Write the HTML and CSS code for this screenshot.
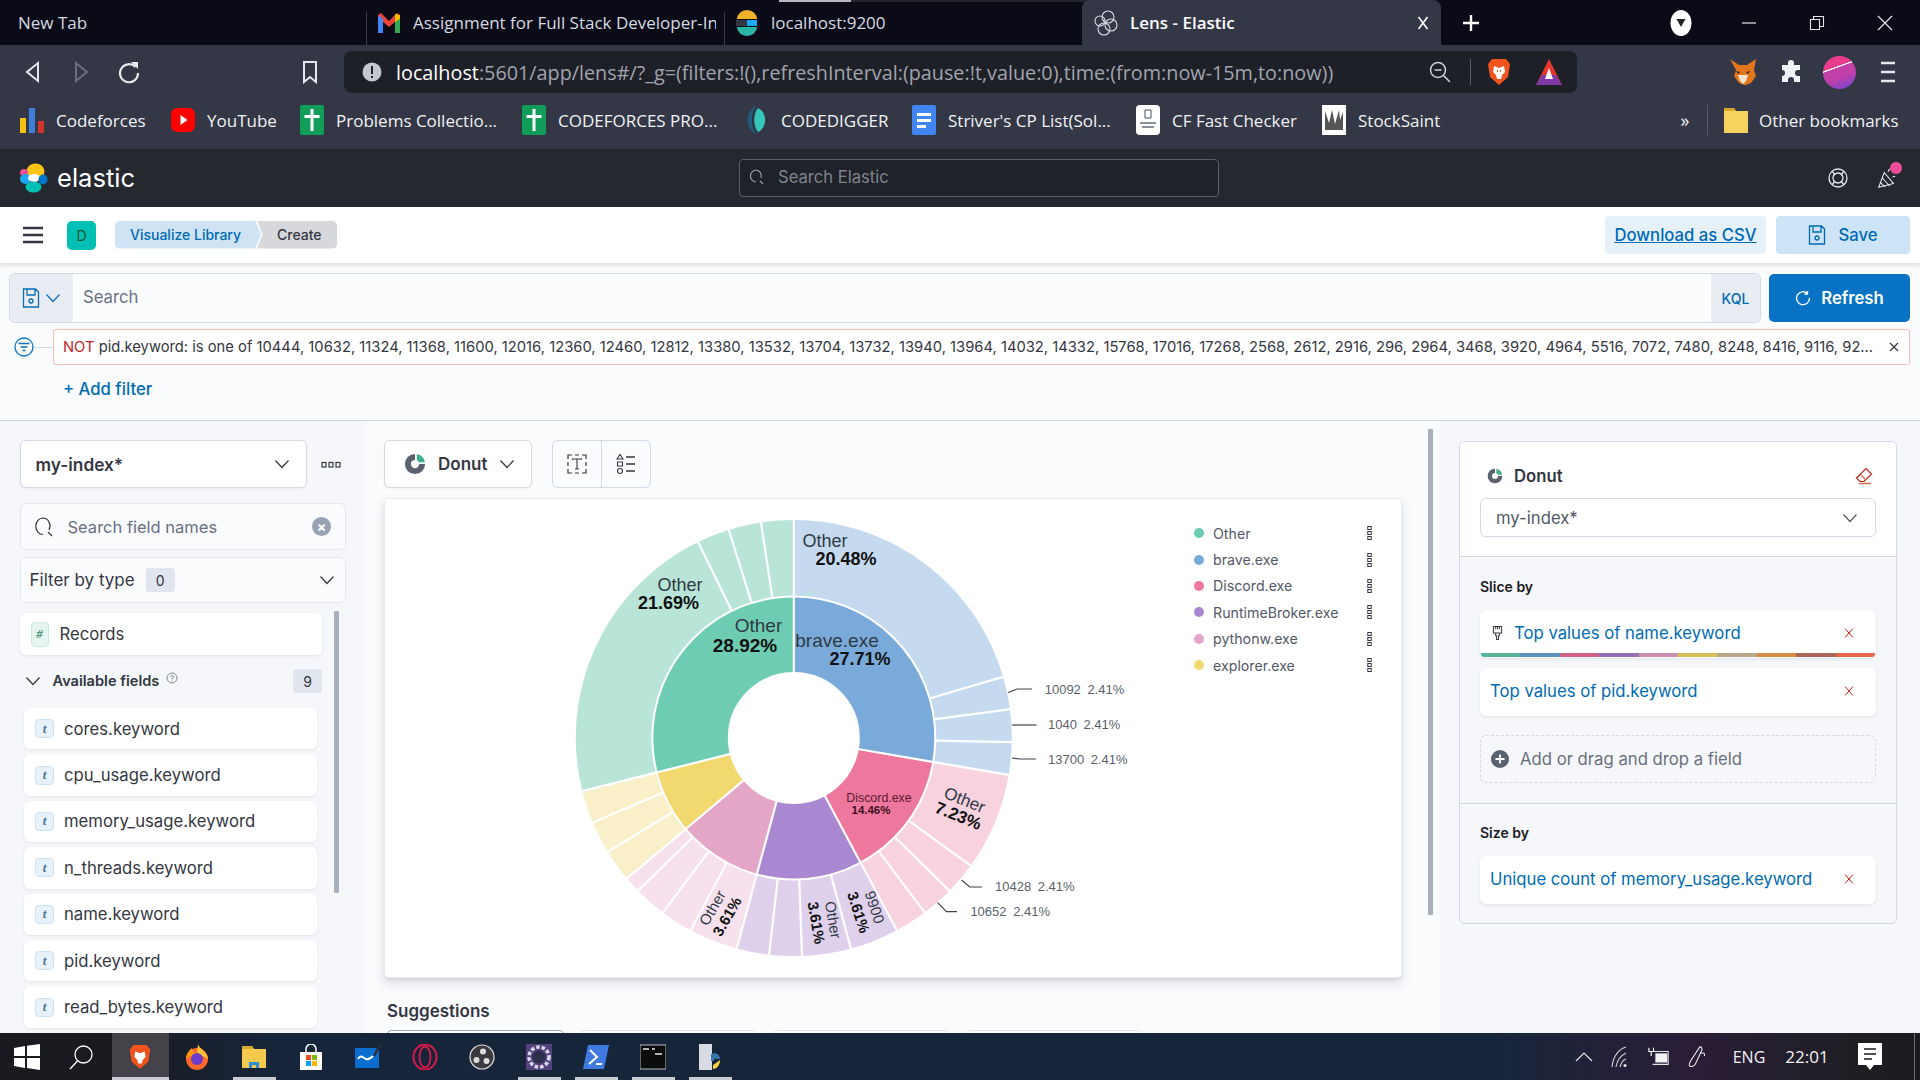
FILE: index.html
```html
<!DOCTYPE html>
<html lang="en">
<head>
<meta charset="utf-8">
<title>Lens - Elastic</title>
<link rel="stylesheet" href="styles.css">
</head>
<body>
<svg class="defs" width="0" height="0">
  <symbol id="chev" viewBox="0 0 16 16"><path d="M1.500 4.500 8 11.500l6.500-7" fill="none" stroke="currentColor" stroke-width="1.200"/></symbol>
  <symbol id="kebab-h" viewBox="0 0 20 8"><g fill="none" stroke="#343741" stroke-width="1.200"><rect x="1" y="1.500" width="4" height="4.500"/><rect x="8" y="1.500" width="4" height="4.500"/><rect x="15" y="1.500" width="4" height="4.500"/></g></symbol>
  <symbol id="kebab-v" viewBox="0 0 5 14"><g fill="none" stroke="#343741" stroke-width="1"><rect x=".8" y=".5" width="3.400" height="3"/><rect x=".8" y="5.500" width="3.400" height="3"/><rect x=".8" y="10.500" width="3.400" height="3"/></g></symbol>
  <symbol id="gplus" viewBox="0 0 24 30"><path d="M2 0h20a2 2 0 0 1 2 2v26a2 2 0 0 1-2 2H2a2 2 0 0 1-2-2V2a2 2 0 0 1 2-2z" fill="#0f9d58"/><path d="M10.500 4h3v6h6v3h-6v13h-3V13h-6v-3h6z" fill="#fff"/></symbol>
  <symbol id="x" viewBox="0 0 12 12"><path d="M2 1.500 10 10.500M10 1.500 2 10.500" stroke="#bd271e" stroke-width="1" fill="none"/></symbol>
  <symbol id="donut" viewBox="0 0 24 24"><path d="M12 1a11 11 0 1 0 11 11h-6.500A4.500 4.500 0 1 1 12 7.500z" fill="#5a6270"/><path d="M14 1.200A11 11 0 0 1 22.800 10h-6.600A5 5 0 0 0 14 7.800z" fill="#3fae8c"/></symbol>
  <symbol id="floppy" viewBox="0 0 18 20"><path d="M1.500 1h12l3 3v15h-15zM5 1v6h8V1M7 13a2 2 0 1 0 4 0 2 2 0 1 0-4 0" fill="none" stroke="currentColor" stroke-width="1.300"/></symbol>
</svg>

<header class="tabs">
  <div class="tab tab-first">New Tab</div>
  <div class="tab">
    <svg class="ic-tab" viewBox="0 0 24 26"><path d="M1 23V5l3-2 8 8 8-8 3 2v18h-5V12l-6 5-6-5v11z" fill="#ea4335"/><path d="M1 23V5l5 4v14z" fill="#4285f4"/><path d="M23 23V5l-5 4v14z" fill="#34a853"/><path d="M18 4l5 1v4l-5 3z" fill="#fbbc04"/></svg>
    <span class="tab-label">Assignment for Full Stack Developer-In</span>
  </div>
  <div class="tab">
    <svg class="ic-tab" viewBox="0 0 24 26"><path d="M2 9a10 9 0 0 1 20 0z" fill="#f0b429"/><path d="M1 10h11v6H1z" fill="#343741"/><path d="M12 10h10v6H12z" fill="#1ba9f5"/><path d="M2 17h20a10 9 0 0 1-20 0z" fill="#2bb5a6"/></svg>
    <span class="tab-label">localhost:9200</span>
  </div>
  <div class="tab tab-active">
    <svg class="ic-tab" viewBox="0 0 24 26"><g fill="none" stroke="#d8dbe2" stroke-width="1.100"><circle cx="14" cy="7" r="6"/><circle cx="6" cy="11" r="5"/><circle cx="17" cy="15" r="6"/><circle cx="10" cy="19" r="6"/></g></svg>
    <span class="tab-label">Lens - Elastic</span>
    <svg class="tab-close" viewBox="0 0 12 14"><path d="M1.500 1 10.500 13M10.500 1 1.500 13" stroke="#fff" stroke-width="1.600"/></svg>
  </div>
  <svg class="new-tab" viewBox="0 0 18 18"><path d="M9 1v16M1 9h16" stroke="#fff" stroke-width="2.400"/></svg>
  <div class="win-ctl">
    <span class="win-btn"><svg class="ic-drop" viewBox="0 0 22 28"><ellipse cx="11" cy="14" rx="10.500" ry="13" fill="#fff"/><path d="M6.500 10h9L11 18z" fill="#24262e"/></svg></span>
    <span class="win-btn"><svg class="ic16" viewBox="0 0 16 16"><path d="M1 8h14" stroke="#e6e6e8" stroke-width="1.200"/></svg></span>
    <span class="win-btn"><svg class="ic16" viewBox="0 0 16 16"><path d="M1.500 4.500h9v10h-9zM4.500 4.500v-3h10v10h-4" fill="none" stroke="#e6e6e8" stroke-width="1.100"/></svg></span>
    <span class="win-btn"><svg class="ic16" viewBox="0 0 16 16"><path d="M1 1 15 15M15 1 1 15" stroke="#e6e6e8" stroke-width="1.200"/></svg></span>
  </div>
</header>

<nav class="toolbar">
  <span class="nav-btn"><svg class="ic24" viewBox="0 0 24 24"><path d="M17 3v18L6 12z" fill="none" stroke="#e8e9ee" stroke-width="2"/></svg></span>
  <span class="nav-btn"><svg class="ic24" viewBox="0 0 24 24"><path d="M7 3v18l11-9z" fill="none" stroke="#6d7080" stroke-width="2"/></svg></span>
  <span class="nav-btn"><svg class="ic24" viewBox="0 0 24 24"><path d="M18.500 7A9 9 0 1 0 21 13" fill="none" stroke="#e8e9ee" stroke-width="2.200"/><path d="M14 2h7v7z" fill="#e8e9ee"/></svg></span>
  <span class="nav-btn bookmark-btn"><svg class="ic24" viewBox="0 0 24 24"><path d="M6 2h12v20l-6-5-6 5z" fill="none" stroke="#e8e9ee" stroke-width="2"/></svg></span>
  <div class="urlbar">
    <svg class="ic20" viewBox="0 0 20 20"><circle cx="10" cy="10" r="9.500" fill="#c5c7cf"/><path d="M9 4h2v8H9zM9 14h2v2H9z" fill="#1f2129"/></svg>
    <span class="url"><b>localhost</b>:5601/app/lens#/?_g=(filters:!(),refreshInterval:(pause:!t,value:0),time:(from:now-15m,to:now))</span>
    <div class="url-actions">
      <svg class="ic24" viewBox="0 0 24 24"><circle cx="10" cy="10" r="7.500" fill="none" stroke="#d0d2d9" stroke-width="1.500"/><path d="M6.500 10h7M15.500 15.500 22 22" stroke="#d0d2d9" stroke-width="1.500"/></svg>
      <span class="url-sep"></span>
      <svg class="ic-lion" viewBox="0 0 24 28"><path d="M5 1h14l4 5-2 13-9 8-9-8L1 6z" fill="#f1531f"/><path d="M7 8l5 2 5-2 1 6-3 3-1 4h-4l-1-4-3-3z" fill="#fff"/><path d="M10 12h1v2h-1zM13 12h1v2h-1z" fill="#f1531f"/></svg>
      <svg class="ic-tri" viewBox="0 0 28 28"><path d="M14 1 27 27H1z" fill="#e6352b"/><path d="M1 27 7 17h14l6 10z" fill="#7d3aa6"/><path d="M14 10 18 21H10z" fill="#fff"/></svg>
    </div>
  </div>
  <span class="nav-btn ext-first"><svg class="ic28" viewBox="0 0 28 28"><path d="M1 1l9 6h8l9-6-2 11 2 6-5 7-5 2h-2l-5-2-5-7 2-6z" fill="#e2761b"/><path d="M9 17h10l-2 6-3 3-3-3z" fill="#f4e3d0"/><path d="M7 13l4 1-2 2zM21 13l-4 1 2 2z" fill="#23262b"/></svg></span>
  <span class="nav-btn"><svg class="ic24" viewBox="0 0 24 24"><path d="M9 3a3 3 0 0 1 6 0v2h6v5h-2a3 3 0 0 0 0 6h2v6h-6v-2a3 3 0 0 0-6 0v2H3v-6a3 3 0 0 0 0-6V5h6z" fill="#f1f2f5"/></svg></span>
  <span class="avatar"></span>
  <span class="nav-btn"><svg class="ic24" viewBox="0 0 24 24"><path d="M5 3h14M5 12h14M5 21h14" stroke="#e8e9ee" stroke-width="2.400"/></svg></span>
</nav>

<nav class="bookmarks">
  <span class="bm"><svg class="ic-bm" viewBox="0 0 24 30"><path d="M0 13h6v15H0z" fill="#f4c20d"/><path d="M9 3h6v25H9z" fill="#3f7fd9"/><path d="M18 16h6v12h-6z" fill="#d0342c"/></svg>Codeforces</span>
  <span class="bm"><svg class="ic-bm" viewBox="0 0 24 30"><rect y="3" width="24" height="24" rx="6" fill="#f00"/><path d="M9.500 10v10l7-5z" fill="#fff"/></svg>YouTube</span>
  <span class="bm"><svg class="ic-bm" viewBox="0 0 24 30"><use href="#gplus"/></svg>Problems Collectio...</span>
  <span class="bm"><svg class="ic-bm" viewBox="0 0 24 30"><use href="#gplus"/></svg>CODEFORCES PRO...</span>
  <span class="bm"><svg class="ic-bm" viewBox="0 0 24 30"><path d="M12 0C0 6-1 23 12 30 5 22 5 8 12 0z" fill="#1e5b7e"/><path d="M13 3c9 4 10 19 0 24-5-6-5-18 0-24z" fill="#36c6bc"/></svg>CODEDIGGER</span>
  <span class="bm"><svg class="ic-bm" viewBox="0 0 24 30"><rect width="24" height="30" rx="2" fill="#4285f4"/><path d="M5 8h14v3H5zM5 14h14v3H5zM5 20h9v3H5z" fill="#fff"/></svg>Striver's CP List(Sol...</span>
  <span class="bm"><svg class="ic-bm" viewBox="0 0 24 30"><rect width="24" height="30" rx="4" fill="#fff"/><path d="M9 5h6v8H9z" fill="none" stroke="#49505c"/><path d="M4 17h16v2H4zM6 21h12v2H6z" fill="#8b909a"/></svg>CF Fast Checker</span>
  <span class="bm"><svg class="ic-bm" viewBox="0 0 24 30"><rect width="24" height="30" fill="#fff"/><path d="M3 25V6l4 12 3-13 3 14 4-14 1 10 3-8v18z" fill="#555"/></svg>StockSaint</span>
  <span class="bm-more">»</span>
  <span class="bm bm-other"><svg class="ic-bm" viewBox="0 0 24 30"><path d="M0 3h10l2 3h12v22H0z" fill="#f4d35e"/><path d="M0 3h10l2 3H0z" fill="#d9a82e"/></svg>Other bookmarks</span>
</nav>

<div class="kbn-head">
  <div class="logo">
    <svg class="logo-mark" viewBox="0 0 28 30"><ellipse cx="16" cy="8.500" rx="9" ry="8" fill="#fec514"/><ellipse cx="4.500" cy="9.500" rx="4" ry="3.500" fill="#f04e98"/><ellipse cx="6" cy="16" rx="5.500" ry="5" fill="#1ba9f5"/><ellipse cx="14.500" cy="15" rx="6" ry="4" fill="#fff"/><ellipse cx="14" cy="24" rx="8" ry="5.500" fill="#00bfb3"/><ellipse cx="23.500" cy="16.500" rx="4.500" ry="5" fill="#0077cc"/></svg>
    <span class="logo-text">elastic</span>
  </div>
  <div class="kbn-search">
    <svg class="ic14" viewBox="0 0 16 16"><path d="M7 1a5.500 6 0 1 0 0 12M7 1a5.500 6 0 0 1 5 8M11 12l3 3" fill="none" stroke="#9a9ea9" stroke-width="1.100"/></svg>
    <span>Search Elastic</span>
  </div>
  <div class="kbn-head-right">
    <svg class="ic22" viewBox="0 0 22 22"><g fill="none" stroke="#e6e8ec" stroke-width="1.300"><circle cx="11" cy="11" r="9"/><circle cx="11" cy="11" r="5"/><path d="M5 4l3 4M17 4l-3 4M5 18l3-4M17 18l-3-4"/></g></svg>
    <span class="party">
      <svg class="ic22" viewBox="0 0 22 24"><path d="M2 22 8 6l10 12zM6 12l8 9M4 17l5 5M12 5l2-3M17 11l3-1" fill="none" stroke="#e6e8ec" stroke-width="1.200"/></svg>
      <i class="party-dot"></i>
    </span>
  </div>
</div>

<div class="crumbbar">
  <svg class="burger" viewBox="0 0 20 18"><path d="M0 2h20M0 9h20M0 16h20" stroke="#343741" stroke-width="2.400"/></svg>
  <span class="space-badge">D</span>
  <div class="crumbs">
    <span class="crumb crumb-link">Visualize Library</span>
    <span class="crumb crumb-last">Create</span>
  </div>
  <div class="crumb-actions">
    <a class="btn-csv">Download as CSV</a>
    <a class="btn-save"><svg class="ic-floppy" viewBox="0 0 18 20"><use href="#floppy"/></svg>Save</a>
  </div>
</div>

<section class="query">
  <div class="query-row">
    <div class="query-group">
      <span class="query-prepend">
        <svg class="ic-floppy" viewBox="0 0 18 20"><use href="#floppy"/></svg>
        <svg class="ic14" viewBox="0 0 16 16"><use href="#chev"/></svg>
      </span>
      <span class="query-input">Search</span>
      <span class="query-kql">KQL</span>
    </div>
    <a class="btn-refresh">
      <svg class="ic14" viewBox="0 0 16 16"><path d="M12.500 3.500A6.500 6.500 0 1 0 14.500 8M12.500 1v3h-3" fill="none" stroke="#fff" stroke-width="1.300"/></svg>
      Refresh
    </a>
  </div>
  <div class="filter-row">
    <svg class="filter-ic" viewBox="0 0 20 20"><circle cx="10" cy="10" r="9" fill="none" stroke="#0a75c4" stroke-width="1.300"/><path d="M4.500 6.500h11M6.500 10h7M8.500 13.500h3" stroke="#0a75c4" stroke-width="1.300"/></svg>
    <span class="filter-link"></span>
    <div class="filter-pill">
      <span class="filter-text"><span class="not">NOT</span> pid.keyword: is one of 10444, 10632, 11324, 11368, 11600, 12016, 12360, 12460, 12812, 13380, 13532, 13704, 13732, 13940, 13964, 14032, 14332, 15768, 17016, 17268, 2568, 2612, 2916, 296, 2964, 3468, 3920, 4964, 5516, 7072, 7480, 8248, 8416, 9116, 9240, 9900</span>
      <svg class="filter-x" viewBox="0 0 12 12"><path d="M2 2l8 8M10 2l-8 8" stroke="#343741" stroke-width="1.200"/></svg>
    </div>
  </div>
  <a class="add-filter">+ Add filter</a>
</section>

<main class="workspace">
  <aside class="fields">
    <div class="index-row">
      <div class="select select-index"><b>my-index*</b><svg class="ic14" viewBox="0 0 16 16"><use href="#chev"/></svg></div>
      <svg class="kebab-h" viewBox="0 0 20 8"><use href="#kebab-h"/></svg>
    </div>
    <div class="field-search">
      <svg class="ic20" viewBox="0 0 20 20"><path d="M9 1a7 8 0 1 0 0 16.500M9 1a7 8 0 0 1 6 12M14 15l4 4" fill="none" stroke="#343741" stroke-width="1.200"/></svg>
      <span class="field-search-ph">Search field names</span>
      <span class="clear-x">×</span>
    </div>
    <div class="field-filter"><span>Filter by type</span><span class="count">0</span><svg class="ic14 push" viewBox="0 0 16 16"><use href="#chev"/></svg></div>
    <div class="field-scroll">
      <div class="field-col">
        <div class="record"><i class="ftype ftype-num">#</i>Records</div>
        <div class="avail">
          <svg class="ic14" viewBox="0 0 16 16"><use href="#chev"/></svg>
          <b>Available fields</b>
          <svg class="help" viewBox="0 0 12 12"><circle cx="6" cy="6" r="5" fill="none" stroke="#69707d" stroke-width=".8"/><path d="M4.500 4.800A1.500 1.500 0 1 1 6 6.500V7.500M6 8.500v1" fill="none" stroke="#69707d" stroke-width=".8"/></svg>
          <span class="count count-avail">9</span>
        </div>
        <ul class="field-list">
          <li class="field"><i class="ftype">t</i>cores.keyword</li>
          <li class="field"><i class="ftype">t</i>cpu_usage.keyword</li>
          <li class="field"><i class="ftype">t</i>memory_usage.keyword</li>
          <li class="field"><i class="ftype">t</i>n_threads.keyword</li>
          <li class="field"><i class="ftype">t</i>name.keyword</li>
          <li class="field"><i class="ftype">t</i>pid.keyword</li>
          <li class="field"><i class="ftype">t</i>read_bytes.keyword</li>
        </ul>
      </div>
      <span class="scrollbar scrollbar-left"></span>
    </div>
  </aside>

  <section class="stage">
    <div class="stage-col">
      <div class="stage-tools">
        <div class="select select-chart"><svg class="ic22" viewBox="0 0 24 24"><use href="#donut"/></svg><b>Donut</b><svg class="ic14" viewBox="0 0 16 16"><use href="#chev"/></svg></div>
        <div class="tool-group">
          <span class="tool"><svg class="ic22" viewBox="0 0 22 22"><path d="M2 6V2h4M9 2h4M16 2h4v4M2 9v4M20 9v4M2 16v4h4M9 20h4M16 20h4v-4" fill="none" stroke="#343741" stroke-width="1.200"/><path d="M6.500 7V6h9v1M11 6v10M9 16h4" fill="none" stroke="#343741" stroke-width="1.100"/></svg></span>
          <span class="tool"><svg class="ic22" viewBox="0 0 22 22"><g fill="none" stroke="#343741" stroke-width="1.100"><path d="M5 1.500 8 6H2zM2.500 9h5v4h-5z"/><circle cx="5" cy="18" r="2.500"/><path d="M11 4h9M11 11h9M11 18h9" stroke-width="1.300"/></g></svg></span>
        </div>
      </div>
      <div class="chart-card">
        <svg class="sunburst" viewBox="385 498 1016 479">
          <g transform="translate(794.800 738) rotate(-90)" fill="none">
            <g stroke-width="76.500">
              <circle r="179.750" pathLength="83" stroke="#c5daef" stroke-dasharray="23 60"/>
              <circle r="179.750" pathLength="83" stroke="#f8d2df" stroke-dasharray="12 71" stroke-dashoffset="-23"/>
              <circle r="179.750" pathLength="83" stroke="#dfd0ec" stroke-dasharray="10 73" stroke-dashoffset="-35"/>
              <circle r="179.750" pathLength="83" stroke="#f6e1ed" stroke-dasharray="8 75" stroke-dashoffset="-45"/>
              <circle r="179.750" pathLength="83" stroke="#f9efc9" stroke-dasharray="6 77" stroke-dashoffset="-53"/>
              <circle r="179.750" pathLength="83" stroke="#b8e5d8" stroke-dasharray="24 59" stroke-dashoffset="-59"/>
            </g>
            <g stroke-width="75.500">
              <circle r="103.750" pathLength="83" stroke="#79aad9" stroke-dasharray="23 60"/>
              <circle r="103.750" pathLength="83" stroke="#ee789d" stroke-dasharray="12 71" stroke-dashoffset="-23"/>
              <circle r="103.750" pathLength="83" stroke="#a987d1" stroke-dasharray="10 73" stroke-dashoffset="-35"/>
              <circle r="103.750" pathLength="83" stroke="#e4a6c7" stroke-dasharray="8 75" stroke-dashoffset="-45"/>
              <circle r="103.750" pathLength="83" stroke="#f1d86f" stroke-dasharray="6 77" stroke-dashoffset="-53"/>
              <circle r="103.750" pathLength="83" stroke="#6dccb1" stroke-dasharray="24 59" stroke-dashoffset="-59"/>
            </g>
            <circle r="141.500" stroke="#fff" stroke-width="2"/>
          </g>
          <g transform="translate(794.800 738)" class="seps">
            <g id="outer-seps">
              <path d="M0-141V-219"/>
              <path d="M0-141V-219" transform="rotate(73.73)"/>
              <path d="M0-141V-219" transform="rotate(82.41)"/>
              <path d="M0-141V-219" transform="rotate(91.08)"/>
              <path d="M0-141V-219" transform="rotate(99.76)"/>
              <path d="M0-141V-219" transform="rotate(125.78)"/>
              <path d="M0-141V-219" transform="rotate(134.46)"/>
              <path d="M0-141V-219" transform="rotate(143.13)"/>
              <path d="M0-141V-219" transform="rotate(151.81)"/>
              <path d="M0-141V-219" transform="rotate(164.82)"/>
              <path d="M0-141V-219" transform="rotate(177.83)"/>
              <path d="M0-141V-219" transform="rotate(186.51)"/>
              <path d="M0-141V-219" transform="rotate(195.18)"/>
              <path d="M0-141V-219" transform="rotate(208.19)"/>
              <path d="M0-141V-219" transform="rotate(216.87)"/>
              <path d="M0-141V-219" transform="rotate(225.54)"/>
              <path d="M0-141V-219" transform="rotate(229.88)"/>
              <path d="M0-141V-219" transform="rotate(238.55)"/>
              <path d="M0-141V-219" transform="rotate(247.23)"/>
              <path d="M0-141V-219" transform="rotate(255.90)"/>
              <path d="M0-141V-219" transform="rotate(333.98)"/>
              <path d="M0-141V-219" transform="rotate(342.65)"/>
              <path d="M0-141V-219" transform="rotate(351.33)"/>
            </g>
            <path d="M0-65V-142"/>
            <path d="M0-65V-142" transform="rotate(99.76)"/>
            <path d="M0-65V-142" transform="rotate(151.81)"/>
            <path d="M0-65V-142" transform="rotate(195.18)"/>
            <path d="M0-65V-142" transform="rotate(229.88)"/>
            <path d="M0-65V-142" transform="rotate(255.90)"/>
          </g>
          <g class="leaders">
            <path d="M1009 692.700 1018 689H1033"/>
            <path d="M1013 725H1037.500"/>
            <path d="M1013 758 1020.700 759H1036.800"/>
            <path d="M962.500 880 970.700 887H983"/>
            <path d="M938.600 902.700 947.500 911.700H958"/>
          </g>
          <g class="lbl">
            <text x="826" y="547">Other</text><text class="b" x="847" y="565">20.48%</text>
            <text x="681" y="591">Other</text><text class="b" x="669.500" y="609">21.69%</text>
            <text class="big" x="759.500" y="632">Other</text><text class="big b" x="746" y="651.500">28.92%</text>
            <text class="big" x="838" y="647">brave.exe</text><text class="b" x="861" y="665">27.71%</text>
            <text class="sm" x="880" y="802">Discord.exe</text><text class="sm b" x="872" y="814">14.46%</text>
            <g transform="rotate(22 962 809)"><text class="mid" x="962" y="805">Other</text><text class="mid b" x="962" y="822">7.23%</text></g>
            <g transform="rotate(72 864 911)"><text class="tiny" x="864" y="904">9900</text><text class="tiny b" x="864" y="921">3.61%</text></g>
            <g transform="rotate(80 822 922)"><text class="tiny" x="822" y="915">Other</text><text class="tiny b" x="822" y="932">3.61%</text></g>
            <g transform="rotate(-60 724 914)"><text class="tiny" x="724" y="907">Other</text><text class="tiny b" x="724" y="924">3.61%</text></g>
          </g>
          <g class="outlbl">
            <text x="1045.700" y="694">10092 2.41%</text>
            <text x="1049" y="729">1040 2.41%</text>
            <text x="1049" y="763.500">13700 2.41%</text>
            <text x="996" y="890.500">10428 2.41%</text>
            <text x="971.400" y="915.500">10652 2.41%</text>
          </g>
        </svg>
        <ul class="legend">
          <li class="lg"><i class="dot d1"></i><span>Other</span><svg class="kebab-v" viewBox="0 0 5 14"><use href="#kebab-v"/></svg></li>
          <li class="lg"><i class="dot d2"></i><span>brave.exe</span><svg class="kebab-v" viewBox="0 0 5 14"><use href="#kebab-v"/></svg></li>
          <li class="lg"><i class="dot d3"></i><span>Discord.exe</span><svg class="kebab-v" viewBox="0 0 5 14"><use href="#kebab-v"/></svg></li>
          <li class="lg"><i class="dot d4"></i><span>RuntimeBroker.exe</span><svg class="kebab-v" viewBox="0 0 5 14"><use href="#kebab-v"/></svg></li>
          <li class="lg"><i class="dot d5"></i><span>pythonw.exe</span><svg class="kebab-v" viewBox="0 0 5 14"><use href="#kebab-v"/></svg></li>
          <li class="lg"><i class="dot d6"></i><span>explorer.exe</span><svg class="kebab-v" viewBox="0 0 5 14"><use href="#kebab-v"/></svg></li>
        </ul>
      </div>
      <h2 class="sugg-title">Suggestions</h2>
      <div class="sugg-row">
        <span class="sugg sugg-on"></span><span class="sugg"></span><span class="sugg"></span><span class="sugg"></span>
      </div>
    </div>
    <span class="scrollbar scrollbar-mid"></span>
  </section>

  <aside class="config">
    <div class="config-card">
      <div class="config-top">
        <div class="config-title">
          <svg class="ic16" viewBox="0 0 24 24"><use href="#donut"/></svg>
          <b>Donut</b>
          <svg class="eraser" viewBox="0 0 18 18"><path d="M1.500 11 11 1.500l5.500 5.500L9 14.500H5z" fill="none" stroke="#bd271e" stroke-width="1.200"/><path d="M4 16.500h12M6 8l5 5" stroke="#e7664c" stroke-width="1.400"/></svg>
        </div>
        <div class="select select-layer"><span>my-index*</span><svg class="ic14" viewBox="0 0 16 16"><use href="#chev"/></svg></div>
      </div>
      <div class="config-sec">
        <h3 class="sec-label">Slice by</h3>
        <div class="dim dim-palette">
          <svg class="brush" viewBox="0 0 12 16"><path d="M1.500 1h9v7h-9zM4 1v3M6 1v3M8 1v3M4 8v3h1v4h2v-4h1V8" fill="none" stroke="#343741" stroke-width="1.100"/></svg>
          <span class="dim-text">Top values of name.keyword</span>
          <svg class="dim-x" viewBox="0 0 12 12"><use href="#x"/></svg>
          <div class="palette"><i class="p1"></i><i class="p2"></i><i class="p3"></i><i class="p4"></i><i class="p5"></i><i class="p6"></i><i class="p7"></i><i class="p8"></i><i class="p9"></i><i class="p10"></i></div>
        </div>
        <div class="dim"><span class="dim-text">Top values of pid.keyword</span><svg class="dim-x" viewBox="0 0 12 12"><use href="#x"/></svg></div>
        <div class="dim-add">
          <svg class="plus" viewBox="0 0 18 18"><circle cx="9" cy="9" r="9" fill="#5a6270"/><path d="M4.500 9h9M9 4.500v9" stroke="#fff" stroke-width="1.800"/></svg>
          <span>Add or drag and drop a field</span>
        </div>
      </div>
      <div class="config-sec config-sec-last">
        <h3 class="sec-label">Size by</h3>
        <div class="dim"><span class="dim-text">Unique count of memory_usage.keyword</span><svg class="dim-x" viewBox="0 0 12 12"><use href="#x"/></svg></div>
      </div>
    </div>
  </aside>
</main>

<footer class="taskbar">
  <span class="tb tb-start"><svg class="ic26" viewBox="0 0 26 26"><path d="M0 4l11-2v10H0zM13 1.700 26 0v12H13zM0 14h11v10L0 22zM13 14h13v12l-13-2z" fill="#fff"/></svg></span>
  <span class="tb tb-search"><svg class="ic-search" viewBox="0 0 26 26"><circle cx="15.500" cy="10.500" r="8.500" fill="none" stroke="#fff" stroke-width="1.300"/><path d="M9.500 17 2 25" stroke="#fff" stroke-width="1.300"/></svg></span>
  <span class="tb tb-run tb-active"><svg class="ic26" viewBox="0 0 24 28"><path d="M5 1h14l4 5-2 13-9 8-9-8L1 6z" fill="#f1531f"/><path d="M7 8l5 2 5-2 1 6-3 3-1 4h-4l-1-4-3-3z" fill="#fff"/></svg></span>
  <span class="tb"><svg class="ic26" viewBox="0 0 26 26"><circle cx="13" cy="15" r="11" fill="#ff6a2a"/><path d="M14 0c1 5 9 7 10 15L13 9z" fill="#ffc233"/><path d="M2 15C3 8 6 6 8 4c0 3 2 4 4 5z" fill="#ff980e"/><circle cx="13" cy="15" r="6" fill="#6d3bc9"/></svg></span>
  <span class="tb tb-run"><svg class="ic26" viewBox="0 0 26 26"><path d="M1 2h10l2 3h12v19H1z" fill="#f5c94e"/><path d="M1 2h10l2 3H1z" fill="#d9a82e"/><path d="M8 18h10v6h-3v-3h-4v3H8z" fill="#2c8fd6"/></svg></span>
  <span class="tb"><svg class="ic26" viewBox="0 0 26 26"><path d="M8 8V5a5 5 0 0 1 10 0v3" fill="none" stroke="#fff" stroke-width="1.500"/><rect x="2" y="8" width="22" height="18" fill="#fff"/><path d="M8 11h5v5H8z" fill="#f25022"/><path d="M14 11h5v5h-5z" fill="#7fba00"/><path d="M8 17h5v5H8z" fill="#00a4ef"/><path d="M14 17h5v5h-5z" fill="#ffb900"/></svg></span>
  <span class="tb"><svg class="ic26" viewBox="0 0 26 26"><rect y="4" width="24" height="20" fill="#0a6ed1"/><path d="M3 15c3-5 5-1 8 0s5-1 7-3" fill="none" stroke="#fff" stroke-width="2"/><path d="M19 12 25 1" stroke="#2a2e3a" stroke-width="2.500"/></svg></span>
  <span class="tb"><svg class="ic26" viewBox="0 0 26 26"><ellipse cx="13" cy="13" rx="11.500" ry="12.500" fill="none" stroke="#d8194a" stroke-width="2"/><ellipse cx="13" cy="13" rx="5.500" ry="10.500" fill="none" stroke="#d8194a" stroke-width="1.800"/></svg></span>
  <span class="tb"><svg class="ic26" viewBox="0 0 26 26"><circle cx="13" cy="13" r="12" fill="#3b3b40" stroke="#ddd" stroke-width="1.200"/><g fill="#ddd"><circle cx="14" cy="7.500" r="3"/><circle cx="7.500" cy="16" r="3"/><circle cx="17.500" cy="17" r="3"/></g></svg></span>
  <span class="tb tb-run"><svg class="ic26" viewBox="0 0 26 26"><rect width="26" height="26" fill="#54417e"/><circle cx="13" cy="13" r="10" fill="none" stroke="#d9dbe4" stroke-width="3.500" stroke-dasharray="3.500 2"/><circle cx="13" cy="13" r="6.500" fill="#2b2f4a"/></svg></span>
  <span class="tb tb-run"><svg class="ic26" viewBox="0 0 26 26"><path d="M5 1h21l-5 24H0z" fill="#3f7ae0"/><path d="M7 6l7 7-8 7M13 20h6" fill="none" stroke="#fff" stroke-width="2"/></svg></span>
  <span class="tb tb-run"><svg class="ic26" viewBox="0 0 26 26"><rect y="1" width="26" height="24" fill="#0c0c0c" stroke="#b9bcc4"/><path d="M3 5h6M12 5h3M15 10h7" stroke="#e6e6e6" stroke-width="1.600"/></svg></span>
  <span class="tb tb-run"><svg class="ic26" viewBox="0 0 26 26"><path d="M2 0h13v26H2z" fill="#d8dbe2"/><path d="M14 10c6-2 9 1 9 5h-6v2h-3z" fill="#3776ab"/><path d="M23 16c0 5-3 9-7 9v-4l3-2z" fill="#ffd43b"/></svg></span>
  <div class="tray">
    <span class="tr"><svg class="ic18" viewBox="0 0 18 18"><path d="M1 13 9 5l8 8" fill="none" stroke="#e6e6e6" stroke-width="1.200"/></svg></span>
    <span class="tr"><svg class="ic22" viewBox="0 0 22 22"><path d="M2 21C3 10 9 3 16 1M6 21c1-7 4-11 10-14M10 21c1-4 3-7 6-8" fill="none" stroke="#d4d5d8" stroke-width="1.100"/><circle cx="15" cy="19.500" r="1.600" fill="#e6e6e6"/></svg></span>
    <span class="tr"><svg class="ic22" viewBox="0 0 24 22"><path d="M5 5h17v14H5" fill="none" stroke="#e6e6e6" stroke-width="1.200"/><path d="M8 7h13v10H8z" fill="#f2f2f2"/><path d="M1 1v4h5V1M3.500 5v5" fill="none" stroke="#fff" stroke-width="1.200"/></svg></span>
    <span class="tr"><svg class="ic22" viewBox="0 0 22 24"><path d="M13 1c2 0 3 2 2 4L8 20c-1 2-5 3-6 2s0-4 1-6z M13 8c4-1 6 0 5 3" fill="none" stroke="#e6e6e6" stroke-width="1.200"/></svg></span>
    <span class="tr tr-txt">ENG</span>
    <span class="tr tr-txt tr-time">22:01</span>
    <span class="tr tr-note"><svg class="ic-note" viewBox="0 0 24 28"><path d="M0 0h24v22h-8l-4 5-4-5H0z" fill="#fff"/><path d="M6 6h12M6 11h12M6 16h8" stroke="#1a1a1f" stroke-width="1.300"/></svg></span>
    <span class="tr-edge"></span>
  </div>
</footer>
</body>
</html>
```

FILE: styles.css
```css
* { box-sizing: border-box; }
html, body { margin: 0; padding: 0; }
body {
  width: 1920px; height: 1080px; overflow: hidden;
  display: flex; flex-direction: column;
  font-family: Inter, "Liberation Sans", sans-serif;
  color: #343741; background: #fafbfd;
}
svg { display: block; flex: none; }
ul { list-style: none; margin: 0; padding: 0; }
h2, h3 { margin: 0; }
i { font-style: normal; }
.defs { position: absolute; }
.ic14 { width: 16px; height: 16px; }
.ic16 { width: 16px; height: 16px; }
.ic18 { width: 18px; height: 18px; }
.ic20 { width: 20px; height: 20px; }
.ic22 { width: 22px; height: 22px; }
.ic24 { width: 24px; height: 24px; }
.ic26 { width: 26px; height: 26px; }
.ic28 { width: 28px; height: 28px; }
.ic-tab { width: 24px; height: 26px; }
.ic-drop { width: 22px; height: 28px; }
.ic-search { width: 26px; height: 26px; margin-left: -3px; }

/* browser tabs */
.tabs {
  height: 45px; flex: none; display: flex; align-items: stretch; position: relative;
  background: #0b0b18; color: #d7d9e0;
  font: 17px "Open Sans", "Noto Sans", sans-serif;
}
.tabs::before { content: ""; position: absolute; top: 0; left: 779px; width: 361px; height: 2px; background: linear-gradient(90deg, #b8b9bd 0 72px, #24252c 72px); }
.tab { width: 358px; display: flex; align-items: center; gap: 12px; padding: 0 8px 0 11px; position: relative; }
.tab::before { content: ""; position: absolute; left: 0; top: 12px; bottom: 0; width: 1px; background: #3a3c49; }
.tab-first { width: 366px; padding-left: 18px; }
.tab-first::before { display: none; }
.tab-label { white-space: nowrap; overflow: hidden; flex: 1; }
.tab-active { width: 359px; background: #343746; color: #fff; border-radius: 8px 8px 0 0; padding-left: 12px; font-weight: 600; }
.tab-active::before { display: none; }
.tab-close { width: 12px; height: 14px; margin-right: 4px; }
.new-tab { width: 18px; height: 18px; margin: 14px 0 0 21px; }
.win-ctl { margin-left: auto; display: flex; align-items: center; padding-right: 1px; }
.win-btn { width: 68px; display: flex; justify-content: center; }

/* toolbar */
.toolbar { height: 54px; flex: none; display: flex; align-items: center; background: #343746; padding-left: 9px; }
.nav-btn { width: 48px; display: flex; justify-content: center; }
.bookmark-btn { margin-left: 133px; }
.ext-first { margin-left: 142px; }
.urlbar {
  width: 1233px; height: 42px; margin-left: 10px; border-radius: 8px;
  background: #1e2028; display: flex; align-items: center; padding: 0 14px 0 18px; gap: 14px;
}
.url { font: 19.800px "Open Sans", "Noto Sans", sans-serif; color: #a1a4ae; white-space: nowrap; }
.url b { font-weight: 400; color: #fff; }
.url-actions { margin-left: auto; display: flex; align-items: center; gap: 16px; }
.url-sep { width: 1px; height: 26px; background: #5a5d6a; margin: 0 2px; }
.ic-lion { width: 24px; height: 28px; margin-left: -2.500px; }
.ic-tri { width: 28px; height: 28px; margin-left: 8.500px; }
.avatar { width: 33px; height: 33px; border-radius: 50%; margin: 0 8px; background: linear-gradient(160deg, #ea3c8f 0 34%, #fff 35% 37%, #c240a8 38% 60%, #6b45d6 100%); }

/* bookmarks */
.bookmarks {
  height: 50px; flex: none; padding: 0 0 8px 20px; background: #343746; color: #f1f2f4;
  display: grid; align-items: center;
  grid-template-columns: 151px 129px 222px 223px 167px 224px 186px 341px 44px 1fr;
  font: 17px "Open Sans", "Noto Sans", sans-serif;
}
.bm { display: flex; align-items: center; gap: 12px; white-space: nowrap; }
.ic-bm { width: 24px; height: 30px; }
.bm-more { grid-column: 9; text-align: center; font-size: 18px; }
.bm-other { border-left: 1px solid #5a5d6a; padding-left: 16px; height: 30px; gap: 11px; }

/* kibana header */
.kbn-head { height: 58px; flex: none; background: #25282f; display: flex; align-items: center; padding-left: 19px; position: relative; }
.logo { display: flex; align-items: center; gap: 9px; width: 720px; color: #fff; font-size: 25.600px; font-weight: 400; }
.logo-text { margin-top: -2px; }
.logo-mark { width: 29px; height: 30px; }
.kbn-search {
  width: 480px; height: 38px; border: 1px solid #5a5e68; border-radius: 4px; background: #1f2228;
  display: flex; align-items: center; gap: 13px; padding: 0 0 2px 9px; color: #80848f; font-size: 16.600px;
}
.kbn-head-right { margin-left: auto; display: flex; align-items: center; gap: 27px; padding-right: 22px; }
.party { position: relative; }
.party-dot { position: absolute; top: -5px; right: -4px; width: 12px; height: 12px; border-radius: 50%; background: #f04e98; }

/* breadcrumbs */
.crumbbar { height: 56px; flex: none; background: #fff; display: flex; align-items: center; padding: 0 10px 0 23px; box-shadow: 0 2px 4px rgba(60,70,90,.18); position: relative; }
.burger { width: 20px; height: 18px; }
.space-badge { width: 29px; height: 29px; margin-left: 24px; border-radius: 5px; background: #00bfb3; display: flex; align-items: center; justify-content: center; font-size: 14px; color: #153; }
.crumbs { display: flex; margin: -1px 0 0 19px; font-size: 14px; font-weight: 500; }
.crumb { height: 28px; display: flex; align-items: center; }
.crumb-link { width: 146px; padding-left: 15px; background: #cfe3f5; color: #006bb4; border-radius: 5px 0 0 5px; clip-path: polygon(0 0, 96% 0, 100% 50%, 96% 100%, 0 100%); white-space: nowrap; }
.crumb-last { width: 80px; margin-left: -4px; padding-left: 20px; background: #d6d8dc; color: #343741; border-radius: 0 5px 5px 0; clip-path: polygon(0 0, 100% 0, 100% 100%, 0 100%, 7% 50%); }
.crumb-actions { margin-left: auto; display: flex; gap: 10px; }
.btn-csv { width: 161px; height: 38px; border-radius: 4px; background: #e6f0f9; color: #006bb4; text-decoration: underline; font-size: 16.700px; display: flex; align-items: center; justify-content: center; font-weight: 500; }
.btn-save { width: 134px; height: 38px; border-radius: 4px; background: #cce4f5; color: #006bb4; font-size: 16.700px; font-weight: 500; display: flex; align-items: center; justify-content: center; gap: 12px; }
.ic-floppy { width: 18px; height: 20px; }

/* query */
.query { height: 158px; flex: none; padding-top: 11px; border-bottom: 1px solid #d3dae6; background: #fafbfd; }
.query-row { display: flex; gap: 9px; padding: 0 10px; }
.query-group { flex: 1; height: 48px; display: flex; align-items: stretch; border-radius: 5px; overflow: hidden; box-shadow: 0 0 0 1px #d5dbe6; background: #fbfcfd; }
.query-prepend { width: 63px; background: #e9edf3; color: #0a6fb6; display: flex; align-items: center; justify-content: center; gap: 5px; }
.query-input { flex: 1; display: flex; align-items: center; padding: 0 0 2px 10px; font-size: 16.700px; color: #69707d; }
.query-kql { width: 49px; background: #e9edf3; color: #006bb4; display: flex; align-items: center; justify-content: center; font-size: 14px; font-weight: 500; }
.btn-refresh { width: 141px; height: 48px; border-radius: 5px; background: #0873c4; color: #fff; font-size: 16.700px; font-weight: 600; display: flex; align-items: center; justify-content: center; gap: 10px; }
.filter-row { display: flex; align-items: center; margin-top: 7px; height: 36px; padding: 0 10px 0 14px; }
.filter-ic { width: 20px; height: 20px; }
.filter-link { width: 19px; height: 1px; background: #d3dae6; }
.filter-pill { flex: 1; min-width: 0; height: 36px; border: 1px solid #f2b8b3; border-radius: 3px; background: #fff; display: flex; align-items: center; padding: 0 9px 1px; gap: 9px; font-size: 14.750px; }
.filter-text { flex: 1; min-width: 0; white-space: nowrap; overflow: hidden; text-overflow: ellipsis; }
.not { color: #bd271e; }
.filter-x { width: 12px; height: 12px; }
.add-filter { display: block; margin: 14px 0 0 63px; color: #006bb4; font-size: 16.700px; font-weight: 500; line-height: 20px; }

/* workspace */
.workspace { flex: 1; min-height: 0; display: flex; overflow: hidden; }
.fields { width: 365px; flex: none; background: #f5f7fa; padding: 19px 0 0 19.500px; }
.index-row { display: flex; align-items: center; }
.select { display: flex; align-items: center; background: #fff; border: 1px solid #d3dae6; border-radius: 6px; box-shadow: 0 1px 2px rgba(90,100,120,.08); }
.select-index { width: 287.500px; height: 48px; padding: 0 16px 0 15px; justify-content: space-between; font-size: 17.300px; }
.select b, .config-title b { font-weight: 600; }
.kebab-h { width: 20px; height: 8px; margin: 1px 0 0 14px; }
.field-search { width: 326.500px; height: 47px; margin-top: 15px; background: #fafbfd; border: 1px solid #e3e8f0; border-radius: 6px; display: flex; align-items: center; padding: 0 14px 0 13px; gap: 14px; font-size: 16.500px; color: #69707d; }
.field-search-ph { flex: 1; }
.clear-x { width: 19px; height: 19px; border-radius: 50%; background: #98a2b3; color: #fff; display: flex; align-items: center; justify-content: center; font-size: 14px; font-weight: 700; }
.field-filter { width: 326.500px; height: 46px; margin-top: 7px; background: #fafbfd; border: 1px solid #e3e8f0; border-radius: 6px; display: flex; align-items: center; padding: 0 10px 0 9px; gap: 11px; font-size: 17px; }
.push { margin-left: auto; }
.count { min-width: 29px; height: 24px; padding: 0 8px; border-radius: 4px; background: #e0e5ee; display: flex; align-items: center; justify-content: center; font-size: 14px; }
.field-scroll { display: flex; margin-top: 8px; }
.field-col { width: 302.500px; padding-top: 2px; }
.record { height: 42px; border-radius: 6px; background: #fff; box-shadow: 0 1px 3px rgba(90,100,120,.12); display: flex; align-items: center; padding-left: 11px; gap: 11px; font-size: 16.700px; }
.ftype { width: 19px; height: 19px; border-radius: 4px; border: 1px solid #cfe0ee; background: #e6f1fa; color: #4a7194; font: italic 700 13px "Liberation Serif", serif; display: flex; align-items: center; justify-content: center; }
.ftype-num { background: #e6f5ef; border-color: #c9e8dc; color: #3f8f70; width: 18px; height: 25px; }
.avail { display: flex; align-items: center; height: 24px; margin-top: 14px; padding-left: 5px; }
.avail b { margin-left: 12px; font-size: 14.600px; font-weight: 600; }
.help { width: 12px; height: 12px; margin: -6px 0 0 7px; }
.count-avail { margin-left: auto; }
.field-list { margin: 15px 5px 0 4.500px; display: flex; flex-direction: column; gap: 5px; }
.field { height: 41.400px; border-radius: 6px; background: #fff; box-shadow: 0 1px 3px rgba(90,100,120,.12); display: flex; align-items: center; padding-left: 11px; gap: 10px; font-size: 16.700px; }
.scrollbar { display: block; width: 4.500px; background: #a9b0bd; border-radius: 1px; flex: none; }
.scrollbar-left { height: 282px; margin-left: 12px; }

.stage { width: 1075px; flex: none; display: flex; padding-left: 19px; }
.stage-col { width: 1018px; flex: none; padding-top: 19px; }
.stage-tools { display: flex; gap: 20px; }
.select-chart { width: 148px; height: 48px; padding: 0 13px 0 19px; gap: 12px; font-size: 17px; color: #343741; }
.tool-group { display: flex; width: 99px; height: 48px; border: 1px solid #d3dae6; border-radius: 6px; background: #fbfcfd; }
.tool { flex: 1; display: flex; align-items: center; justify-content: center; }
.tool + .tool { border-left: 1px solid #d3dae6; }
.chart-card {
  position: relative; height: 480px; margin-top: 10px; background: #fff; border-radius: 4px;
  border: 1px solid #e8ebf1; box-shadow: 0 6px 12px rgba(70,80,100,.14), 0 2px 3px rgba(70,80,100,.1);
  display: flex; justify-content: flex-end;
}
.sunburst { position: absolute; left: -1px; top: -1px; width: 1016px; height: 479px; }
.seps path { stroke: #fff; stroke-width: 2.200; }
.leaders path { fill: none; stroke: #3f434c; stroke-width: 1.200; }
.lbl text { font: 18px "Liberation Sans", sans-serif; fill: #2f3a44; text-anchor: middle; }
.lbl text.b { font-weight: 700; fill: #111; }
.lbl text.big { font-size: 19px; }
.lbl text.sm { font-size: 12.400px; fill: #5a1d33; }
.lbl text.sm.b { font-size: 11.500px; fill: #3a1020; }
.lbl text.mid { font-size: 17px; }
.lbl text.tiny { font-size: 15px; }
.outlbl text { font: 13px "Liberation Sans", sans-serif; fill: #5a5f6a; word-spacing: 3px; }
.legend { width: 179px; margin: 21px 28px 0 0; position: relative; }
.lg { height: 26.400px; display: flex; align-items: center; font-size: 14.200px; color: #535966; }
.dot { width: 10px; height: 10px; border-radius: 50%; margin-right: 9px; }
.d1 { background: #6dccb1; } .d2 { background: #79aad9; } .d3 { background: #ee789d; }
.d4 { background: #a987d1; } .d5 { background: #e4a6c7; } .d6 { background: #f1d86f; }
.kebab-v { width: 5px; height: 14px; margin-left: auto; margin-right: 1px; }
.sugg-title { margin: 23px 0 0 3px; font-size: 17px; font-weight: 600; line-height: 20px; }
.sugg-row { display: flex; gap: 14px; margin: 9px 0 0 2px; }
.sugg { width: 179px; height: 60px; flex: none; border: 1px solid #e0e4ec; border-radius: 6px; background: #fff; }
.sugg-on { border-color: #98a2b3; }
.scrollbar-mid { height: 486px; margin: 8px 0 0 26px; }

/* config panel */
.config { flex: 1; background: #f5f7fa; padding: 20px 25px 0 18.500px; }
.config-card { height: 483px; border: 1px solid #d3dae6; border-radius: 6px; overflow: hidden; background: #f5f7fa; }
.config-top { height: 115px; padding: 0 20px 0 20.500px; background: #fff; border-bottom: 1px solid #d3dae6; }
.config-title { display: flex; align-items: center; height: 56px; padding: 11px 0 0 7px; gap: 11px; font-size: 16.700px; }
.eraser { width: 18px; height: 18px; margin-left: auto; margin-right: 3px; }
.select-layer { width: 396px; height: 39px; padding: 0 17px 0 15px; justify-content: space-between; font-size: 16.700px; color: #535966; }
.config-sec { padding: 20px 19px 20px 20.500px; border-bottom: 1px solid #d3dae6; }
.config-sec-last { border-bottom: 0; padding-top: 19px; }
.sec-label { font-size: 14px; font-weight: 600; line-height: 20px; margin-bottom: 13px; color: #1a1c21; }
.dim { position: relative; height: 48px; width: 396px; border-radius: 6px; background: #fff; box-shadow: 0 1px 3px rgba(90,100,120,.14); display: flex; align-items: center; padding: 0 21px 2px 10px; margin-bottom: 10px; overflow: hidden; }
.dim:last-child { margin-bottom: 0; }
.dim-palette { padding-bottom: 3px; padding-left: 12px; gap: 11px; }
.dim-text { color: #006bb4; font-size: 16.700px; white-space: nowrap; }
.dim-x { width: 12px; height: 12px; margin-left: auto; }
.brush { width: 11px; height: 16px; }
.palette { position: absolute; left: 1px; right: 1px; bottom: 1px; height: 4px; display: flex; border-radius: 0 0 3px 3px; overflow: hidden; }
.palette i { flex: 1; }
.p1 { background: #54b399; } .p2 { background: #6092c0; } .p3 { background: #d36086; } .p4 { background: #9170b8; } .p5 { background: #ca8eae; }
.p6 { background: #d6bf57; } .p7 { background: #b9a888; } .p8 { background: #da8b45; } .p9 { background: #aa6556; } .p10 { background: #e7664c; }
.dim-add { width: 396px; height: 48px; margin-top: 19px; border: 1px dashed #d3dae6; border-radius: 6px; display: flex; align-items: center; gap: 11px; padding-left: 10px; font-size: 16.700px; color: #69707d; }
.plus { width: 18px; height: 18px; }

/* taskbar */
.taskbar {
  height: 47px; flex: none; display: flex; color: #f2f2f2; position: relative;
  background: linear-gradient(90deg, #1a1b20 0, #1a1b20 6%, #17253a 14%, #17253a 78%, #2a1d38 88%, #1f1f25 96%, #1b1b1f 100%);
}
.tb { width: 57px; flex: none; display: flex; align-items: center; justify-content: center; position: relative; }
.tb-start { width: 54px; }
.tb-search { width: 57.500px; }
.tb-active { background: #434349; }
.tb-run::after { content: ""; position: absolute; left: 7px; right: 7px; bottom: 0; height: 3px; background: #c9ccd2; }
.tb-active::after { left: 0; right: 0; }
.tray { margin-left: auto; display: grid; grid-template-columns: 36px 38px 38px 40px 62px 54px 72px 14px; width: 354px; }
.tr { display: flex; align-items: center; justify-content: center; }
.tr-txt { font: 16px "Open Sans", "Noto Sans", sans-serif; }
.tr-time { font-size: 17px; }
.ic-note { width: 24px; height: 28px; }
.tr-edge { border-right: 1px solid #6a6c74; margin-right: 5px; }
```
